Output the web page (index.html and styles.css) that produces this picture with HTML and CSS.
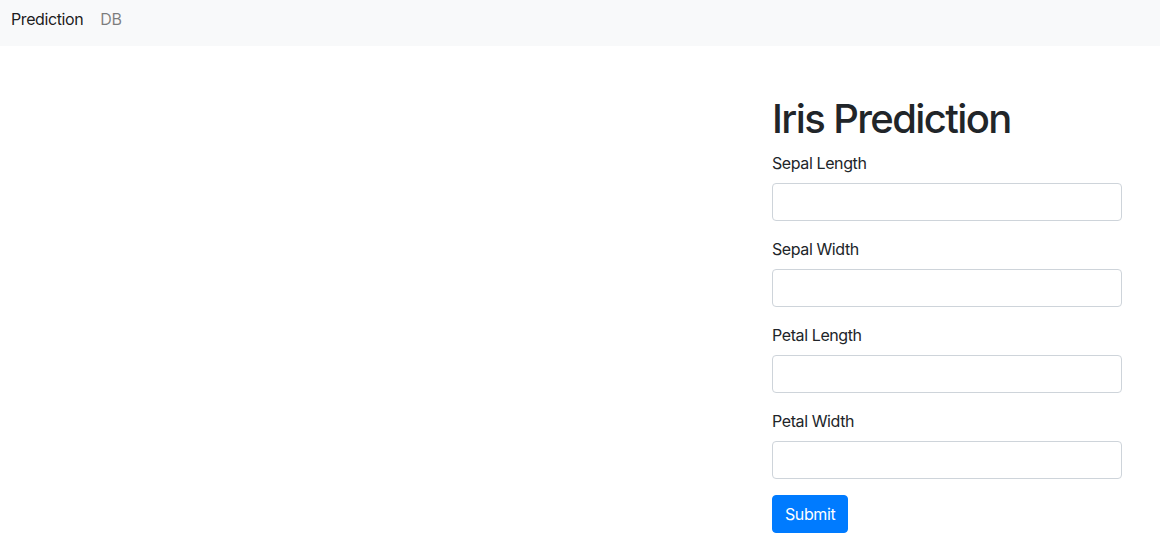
FILE: index.html
```html
<!DOCTYPE html>
<html lang="en">
<head>
<meta charset="utf-8">
<title>Iris Prediction</title>
<link rel="stylesheet" href="styles.css">
</head>
<body>
<nav class="navbar">
  <a class="nav-link active" href="#">Prediction</a>
  <a class="nav-link" href="#">DB</a>
</nav>
<main class="main">
  <div class="spacer"></div>
  <form class="form">
    <h1 class="title">Iris Prediction</h1>
    <div class="group">
      <label class="label" for="sl">Sepal Length</label>
      <input class="input" id="sl" type="text">
    </div>
    <div class="group">
      <label class="label" for="sw">Sepal Width</label>
      <input class="input" id="sw" type="text">
    </div>
    <div class="group">
      <label class="label" for="pl">Petal Length</label>
      <input class="input" id="pl" type="text">
    </div>
    <div class="group">
      <label class="label" for="pw">Petal Width</label>
      <input class="input" id="pw" type="text">
    </div>
    <button class="btn" type="submit">Submit</button>
  </form>
</main>
</body>
</html>
```

FILE: styles.css
```css
* { box-sizing: border-box; }
html, body { margin: 0; padding: 0; }
body {
  font-family: Inter, "Noto Sans", "Liberation Sans", sans-serif;
  font-size: 16px;
  line-height: 24px;
  letter-spacing: -0.4px;
  color: #212529;
  background: #fff;
}
.navbar {
  display: flex;
  gap: 17px;
  height: 46px;
  padding: 7px 11px 15px;
  background: #f8f9fa;
}
.nav-link {
  text-decoration: none;
  color: rgba(0,0,0,0.5);
}
.nav-link.active { color: rgba(0,0,0,0.9); }
.main {
  display: flex;
  padding-top: 49px;
}
.spacer { flex: 1; }
.form {
  width: 350px;
  margin-right: 38px;
}
.title {
  margin: 0 0 8px;
  font-size: 40px;
  line-height: 48px;
  font-weight: 500;
  letter-spacing: -1.6px;
}
.group { margin-bottom: 16px; }
.label {
  display: block;
  margin-bottom: 8px;
}
.input {
  display: block;
  width: 100%;
  height: 38px;
  padding: 6px 12px;
  border: 1px solid #ced4da;
  border-radius: 4px;
  font: inherit;
  background: #fff;
}
.btn {
  display: block;
  height: 38px;
  padding: 6px 12px;
  border: 1px solid #007bff;
  border-radius: 4px;
  background: #007bff;
  color: #fff;
  font: inherit;
  letter-spacing: -0.4px;
  cursor: pointer;
}
```
